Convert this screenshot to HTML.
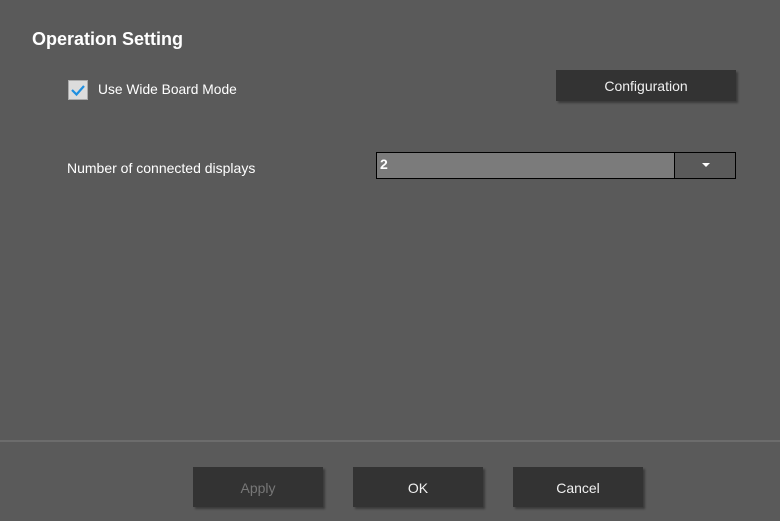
<!DOCTYPE html>
<html><head><style>
body{margin:0;width:780px;height:521px;background:#5a5a5a;font-family:"Segoe UI","Liberation Sans",sans-serif;color:#fff;position:relative;overflow:hidden}
.a{position:absolute}
.btn{position:absolute;background:#333;box-shadow:2px 2px 2px rgba(0,0,0,.35);font-size:14px;text-align:center;color:#f0f0f0}
</style></head><body>
<div class="a" style="left:32px;top:29px;font-size:18px;font-weight:bold">Operation Setting</div>
<div class="a" style="left:68px;top:80px;width:18px;height:18px;background:#dcdcdc;border:1px solid #aaa"></div>
<svg class="a" style="left:68px;top:80px" width="20" height="20"><path d="M4 10 L8.5 14.5 L16 6" stroke="#1e8fe0" stroke-width="2.2" fill="none"/></svg>
<div class="a" style="left:98px;top:82px;font-size:13.8px">Use Wide Board Mode</div>
<div class="btn" style="left:556px;top:70px;width:180px;height:31px;line-height:33px">Configuration</div>
<div class="a" style="left:67px;top:160px;font-size:14px">Number of connected displays</div>
<div class="a" style="left:376px;top:152px;width:358px;height:25px;border:1px solid #000;background:#5a5a5a"></div>
<div class="a" style="left:377px;top:153px;width:297px;height:25px;background:#7b7b7b;border-right:1px solid #000"></div>
<div class="a" style="left:380px;top:156px;font-size:14px;font-weight:bold">2</div>
<svg class="a" style="left:701px;top:162px" width="10" height="6"><path d="M1 1 L9 1 L5 5 Z" fill="#fff"/></svg>
<div class="a" style="left:0;top:440px;width:780px;height:2px;background:#6c6c6c"></div>
<div class="btn" style="left:193px;top:467px;width:130px;height:40px;line-height:42px;color:#777">Apply</div>
<div class="btn" style="left:353px;top:467px;width:130px;height:40px;line-height:42px">OK</div>
<div class="btn" style="left:513px;top:467px;width:130px;height:40px;line-height:42px">Cancel</div>
</body></html>
